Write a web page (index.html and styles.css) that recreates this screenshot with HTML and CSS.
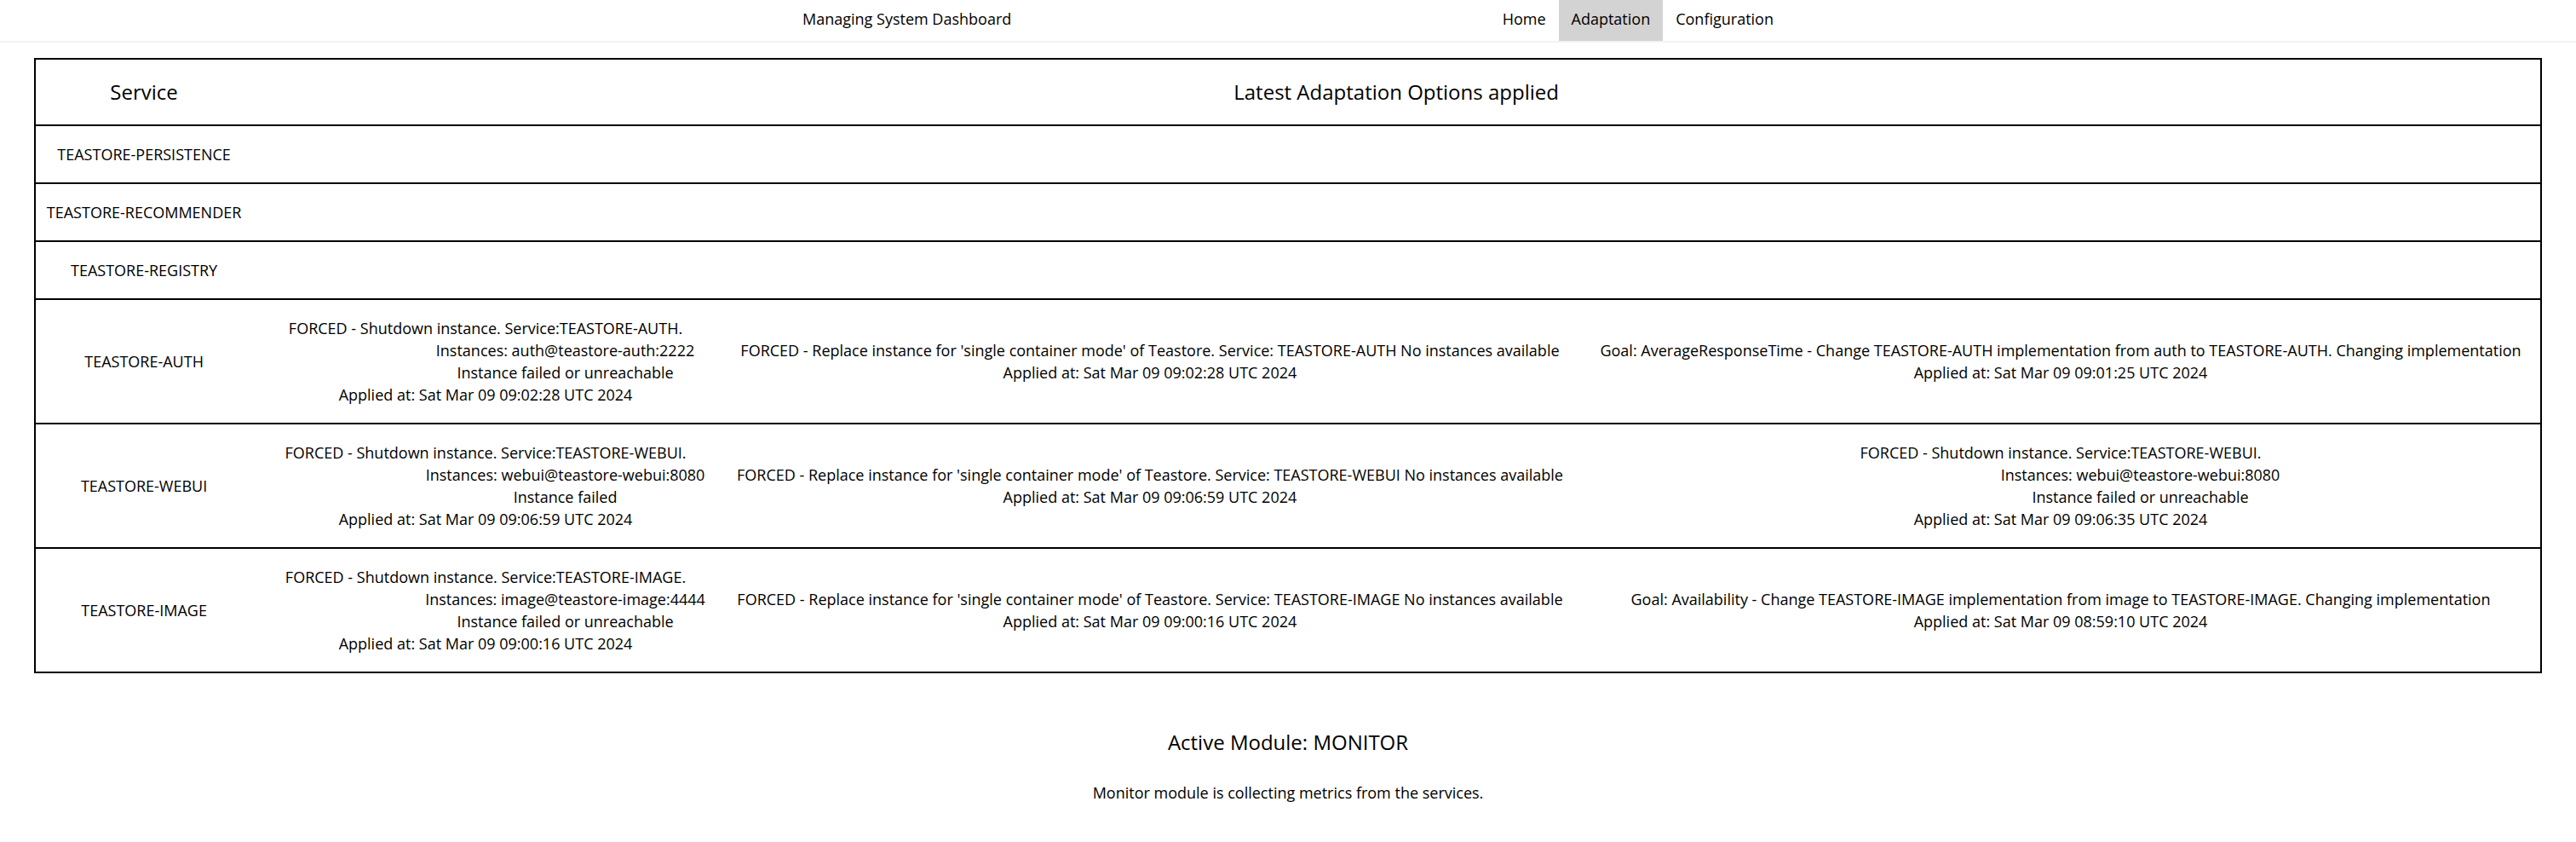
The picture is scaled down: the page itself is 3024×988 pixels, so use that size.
FILE: index.html
```html
<!DOCTYPE html>
<html lang="en">
<head>
<meta charset="utf-8">
<title>Managing System Dashboard</title>
<link rel="stylesheet" href="styles.css">
</head>
<body>
<nav class="nav">
  <div class="nav-inner">
    <span class="brand">Managing System Dashboard</span>
    <ul class="links">
      <li class="link">Home</li>
      <li class="link active">Adaptation</li>
      <li class="link">Configuration</li>
    </ul>
  </div>
</nav>
<main class="main">
  <table class="options">
    <thead>
      <tr>
        <th class="head">Service</th>
        <th class="head" colspan="3">Latest Adaptation Options applied</th>
      </tr>
    </thead>
    <tbody>
      <tr><td class="svc">TEASTORE-PERSISTENCE</td><td></td><td></td><td></td></tr>
      <tr><td class="svc">TEASTORE-RECOMMENDER</td><td></td><td></td><td></td></tr>
      <tr><td class="svc">TEASTORE-REGISTRY</td><td></td><td></td><td></td></tr>
      <tr>
        <td class="svc">TEASTORE-AUTH</td>
        <td class="opt">FORCED - Shutdown instance. Service:TEASTORE-AUTH.
                                        Instances: auth@teastore-auth:2222
                                        Instance failed or unreachable
Applied at: Sat Mar 09 09:02:28 UTC 2024</td>
        <td class="opt">FORCED - Replace instance for 'single container mode' of Teastore. Service: TEASTORE-AUTH No instances available
Applied at: Sat Mar 09 09:02:28 UTC 2024</td>
        <td class="opt">Goal: AverageResponseTime - Change TEASTORE-AUTH implementation from auth to TEASTORE-AUTH. Changing implementation
Applied at: Sat Mar 09 09:01:25 UTC 2024</td>
      </tr>
      <tr>
        <td class="svc">TEASTORE-WEBUI</td>
        <td class="opt">FORCED - Shutdown instance. Service:TEASTORE-WEBUI.
                                        Instances: webui@teastore-webui:8080
                                        Instance failed
Applied at: Sat Mar 09 09:06:59 UTC 2024</td>
        <td class="opt">FORCED - Replace instance for 'single container mode' of Teastore. Service: TEASTORE-WEBUI No instances available
Applied at: Sat Mar 09 09:06:59 UTC 2024</td>
        <td class="opt">FORCED - Shutdown instance. Service:TEASTORE-WEBUI.
                                        Instances: webui@teastore-webui:8080
                                        Instance failed or unreachable
Applied at: Sat Mar 09 09:06:35 UTC 2024</td>
      </tr>
      <tr>
        <td class="svc">TEASTORE-IMAGE</td>
        <td class="opt">FORCED - Shutdown instance. Service:TEASTORE-IMAGE.
                                        Instances: image@teastore-image:4444
                                        Instance failed or unreachable
Applied at: Sat Mar 09 09:00:16 UTC 2024</td>
        <td class="opt">FORCED - Replace instance for 'single container mode' of Teastore. Service: TEASTORE-IMAGE No instances available
Applied at: Sat Mar 09 09:00:16 UTC 2024</td>
        <td class="opt">Goal: Availability - Change TEASTORE-IMAGE implementation from image to TEASTORE-IMAGE. Changing implementation
Applied at: Sat Mar 09 08:59:10 UTC 2024</td>
      </tr>
    </tbody>
  </table>
  <section class="module">
    <h2 class="module-title">Active Module: MONITOR</h2>
    <p class="module-text">Monitor module is collecting metrics from the services.</p>
  </section>
</main>
</body>
</html>
```
FILE: styles.css
```css
* {
  box-sizing: border-box;
}

html, body {
  margin: 0;
  padding: 0;
  background: #ffffff;
}

body {
  font-family: "Open Sans", "Liberation Sans", sans-serif;
  font-size: 18px;
  line-height: 26px;
  color: #000000;
}

.nav {
  height: 50px;
  border-bottom: 2px solid #f2f2f2;
}

.nav-inner {
  width: 1170px;
  margin: 0 auto;
  display: flex;
  justify-content: space-between;
  align-items: stretch;
  height: 48px;
}

.brand {
  padding: 0 15px 4px;
  line-height: 44px;
}

.links {
  list-style: none;
  margin: 0;
  padding: 0;
  display: flex;
}

.link {
  padding: 0 15px 4px;
  line-height: 44px;
}

.link.active {
  background: #d3d3d3;
}

.main {
  padding: 18px 40px 0;
}

.options {
  width: 100%;
  border-collapse: collapse;
  border: 2px solid #000000;
}

.options tr {
  border-top: 2px solid #000000;
}

.options th,
.options td {
  padding: 20px 10px;
  text-align: center;
  vertical-align: middle;
}

.head {
  font-size: 24px;
  line-height: 36px;
  font-weight: normal;
}

.opt {
  white-space: pre-wrap;
}

.module {
  text-align: center;
}

.module-title {
  margin: 63px 0 0;
  font-size: 24px;
  line-height: 36px;
  font-weight: normal;
}

.module-text {
  margin: 28px 0 0;
}
```
